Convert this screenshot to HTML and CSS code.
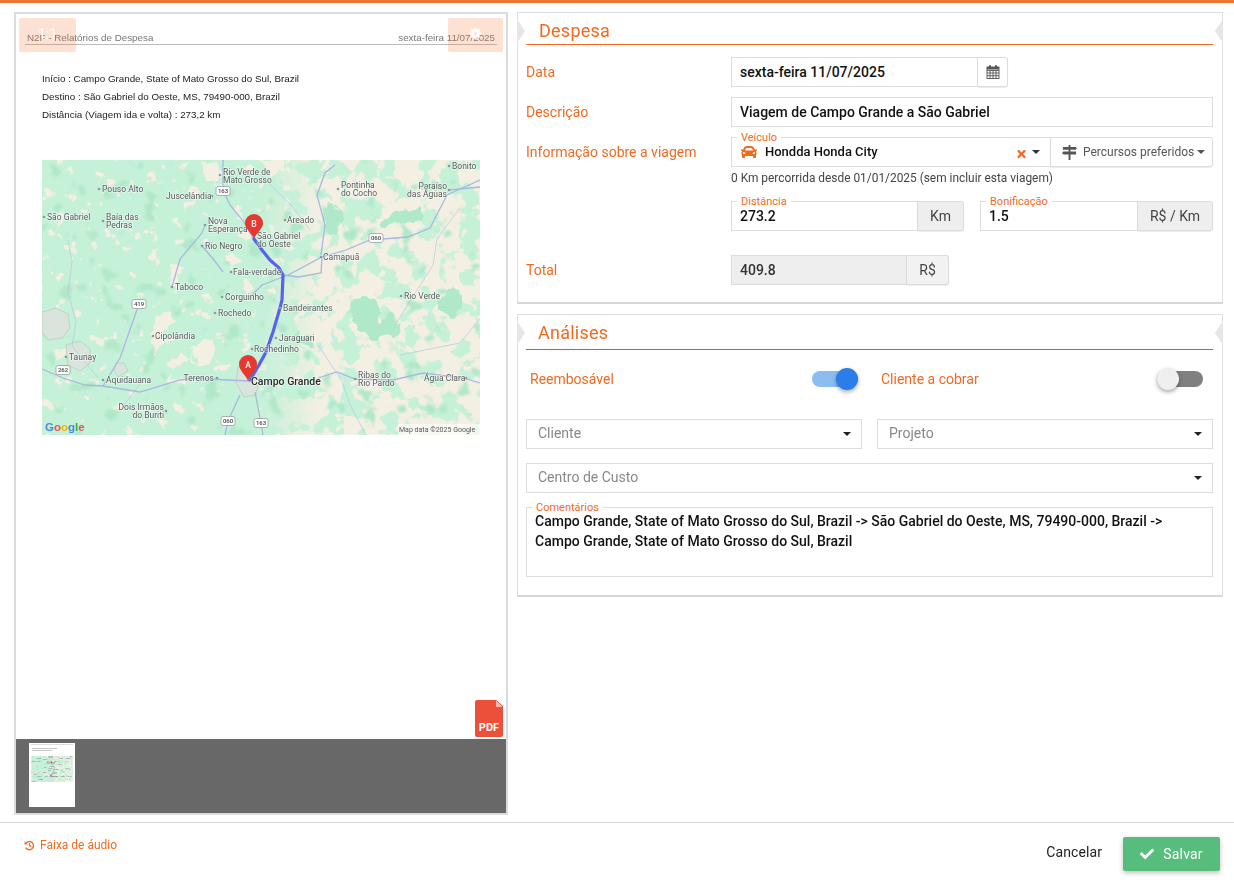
FILE: index.html
```html
<!DOCTYPE html>
<html lang="pt-BR">
<head>
<meta charset="utf-8">
<title>Despesa</title>
<link rel="stylesheet" href="styles.css">
</head>
<body>
<div class="app">
  <main class="main">
    <section class="viewer">
      <div class="page">
        <div class="doc-head"><span>N2F - Relatórios de Despesa</span><span>sexta-feira 11/07/2025</span></div>
        <div class="doc-lines">
          <p>Início : Campo Grande, State of Mato Grosso do Sul, Brazil</p>
          <p>Destino : São Gabriel do Oeste, MS, 79490-000, Brazil</p>
          <p>Distância (Viagem ida e volta) : 273,2 km</p>
        </div>
        <svg class="map" viewBox="42 160 438 275" width="438" height="275">
          <defs>
            <filter id="organic" x="0" y="0" width="1" height="1" color-interpolation-filters="sRGB">
              <feTurbulence type="fractalNoise" baseFrequency=".07" numOctaves="3" seed="4" result="n"/>
              <feDisplacementMap in="SourceGraphic" in2="n" scale="16" xChannelSelector="R" yChannelSelector="G"/>
              <feGaussianBlur stdDeviation=".7"/>
            </filter>
            <filter id="noise-sparse" x="0" y="0" width="1" height="1" color-interpolation-filters="sRGB">
              <feTurbulence type="fractalNoise" baseFrequency=".075" numOctaves="3" seed="11"/>
              <feColorMatrix values="0 0 0 0 .957  0 0 0 0 .937  0 0 0 0 .89  14 0 0 0 -9.100"/>
              <feGaussianBlur stdDeviation=".7"/>
            </filter>
            <filter id="noise-dense" x="0" y="0" width="1" height="1" color-interpolation-filters="sRGB">
              <feTurbulence type="fractalNoise" baseFrequency=".05" numOctaves="3" seed="23"/>
              <feColorMatrix values="0 0 0 0 .957  0 0 0 0 .937  0 0 0 0 .89  14 0 0 0 -6"/>
              <feGaussianBlur stdDeviation=".7"/>
            </filter>
            <filter id="noise-green" x="0" y="0" width="1" height="1" color-interpolation-filters="sRGB">
              <feTurbulence type="fractalNoise" baseFrequency=".05" numOctaves="3" seed="37"/>
              <feColorMatrix values="0 0 0 0 .69  0 0 0 0 .91  0 0 0 0 .79  14 0 0 0 -9.200"/>
              <feGaussianBlur stdDeviation=".8"/>
            </filter>
            <linearGradient id="east-fade" x1="0" x2="1" y1="0" y2="0">
              <stop offset=".5" stop-color="#000"/>
              <stop offset=".64" stop-color="#fff"/>
            </linearGradient>
            <mask id="east-mask" maskUnits="userSpaceOnUse" x="42" y="160" width="438" height="275">
              <rect x="42" y="160" width="438" height="275" fill="url(#east-fade)"/>
            </mask>
          </defs>
          <g id="map-art">
            <rect x="42" y="160" width="438" height="275" fill="#c5f1d9"/>
            <rect class="m-noise" x="42" y="160" width="438" height="275" filter="url(#noise-sparse)"/>
            <g mask="url(#east-mask)"><rect class="m-noise" x="42" y="160" width="438" height="275" filter="url(#noise-dense)"/></g>
            <rect class="m-noise" x="42" y="160" width="438" height="275" filter="url(#noise-green)"/>
            <g filter="url(#organic)">
              <path class="m-cream" d="M204 165l12-4 8 10-8 14-10-6zM262 160l20 0 4 10-16 6zM232 212l12 2 0 8-10-2zM224 253l8 2 2 12-8-2zM172 262l8 8-2 18-8-4zM150 330l8-12 12-6 6 10-12 10 2 14-10 10-4-16zM196 345l14-6 6 8-6 14-14 6zM168 365l14-14 6 8-14 10z"/>
              <path class="m-green" d="M330 200l14 10-4 26-14-2-4-16zM378 222l30-14 14 2-4 10-34 8zM350 300l16-6 10 8 2 18 14-4 10 10-8 10-20 4-16-12-4-16zM440 298l12-10 8 6 2 16-12 8-8-8zM296 330l16 8 2 10-14-4z"/>
            </g>
            <g class="map-soft">
              <path class="m-grey" d="M42 312l14-4 12 6 2 14-8 10-14 2-6-8zM66 345l14-4 10 8 0 14-10 8-12-6zM116 363l8 0 4 8-10 6-4-6zM238 367l16 0 6 10-4 18-12 2-8-14z"/>
              <g class="m-road">
                <path d="M223 160l0 30 7 15 14 17 10 18"/>
                <path d="M283 275l16 2 22-4 1-16 24-7 24-10 38-3 22-9 17-33 33-15"/>
                <path d="M449 190l31-3"/>
                <path d="M42 369l21 9 22 7 18 1 37 6 40-12 16-2 31 2 23 1"/>
                <path d="M318 378l19-6 18 7 38 1 30-7 40 5 17 5"/>
                <path d="M240 395l-12 26-3 14M255 392l6 31 2 12"/>
                <path d="M139 304l-19 54-17 28M172 287l8-28 22-26 3-8M202 246l12 14 9 12"/>
                <path d="M320 258l-32 17-26 10-10 10M335 165l-10 8-8 22 8 30-4 30"/>
              </g>
              <g class="m-river">
                <path d="M68 240l4 22-4 30 8 30-4 24 26 32M262 176l30 30 18 24M318 345l24 36 8 24 16 30M395 325l38-60 4-26 22-30M120 410l20-26M400 355l60-12 20-24"/>
              </g>
            </g>
            <path class="m-route" d="M254 239l8 11 8 10 9 8 4 7-1 25-2 8-7 24-7 20-7 13-9 15"/>
            <g class="map-labels">
              <g class="dots">
                <circle cx="220" cy="175" r="1.3"/><circle cx="99" cy="189" r="1.3"/><circle cx="212" cy="196" r="1.3"/><circle cx="44" cy="217" r="1.3"/><circle cx="103" cy="221" r="1.3"/><circle cx="205" cy="225" r="1.3"/><circle cx="202" cy="246" r="1.3"/><circle cx="231" cy="272" r="1.3"/><circle cx="172" cy="287" r="1.3"/><circle cx="222" cy="297" r="1.3"/><circle cx="285" cy="220" r="1.3"/><circle cx="338" cy="189" r="1.3"/><circle cx="321" cy="257" r="1.3"/><circle cx="449" cy="190" r="1.3"/><circle cx="449" cy="166" r="1.3"/><circle cx="401" cy="296" r="1.3"/><circle cx="215" cy="313" r="1.3"/><circle cx="153" cy="336" r="1.3"/><circle cx="66" cy="357" r="1.3"/><circle cx="103" cy="380" r="1.3"/><circle cx="217" cy="378" r="1.3"/><circle cx="166" cy="411" r="1.3"/><circle cx="280" cy="308" r="1.3"/><circle cx="276" cy="338" r="1.3"/><circle cx="252" cy="349" r="1.3"/><circle cx="355" cy="379" r="1.3"/><circle cx="466" cy="378" r="1.3"/>
              </g>
              <text x="223" y="175">Rio Verde de</text><text x="223" y="183">Mato Grosso</text>
              <text x="102" y="192">Pouso Alto</text><text x="166" y="199">Juscelândia</text>
              <text x="47" y="220">São Gabriel</text><text x="106" y="220">Baía das</text><text x="106" y="228">Pedras</text>
              <text x="208" y="224">Nova</text><text x="208" y="232">Esperança</text><text x="205" y="249">Rio Negro</text>
              <text x="233" y="275">Fala-verdade</text><text x="175" y="290">Taboco</text><text x="225" y="300">Corguinho</text>
              <text x="257" y="239">São Gabriel</text><text x="257" y="247">do Oeste</text><text x="287" y="223">Areado</text>
              <text x="341" y="188">Pontinha</text><text x="341" y="196">do Cocho</text><text x="323" y="260">Camapuã</text>
              <text x="447" y="189" text-anchor="end">Paraíso</text><text x="447" y="197" text-anchor="end">das Águas</text>
              <text x="452" y="169">Bonito</text><text x="404" y="299">Rio Verde</text><text x="218" y="316">Rochedo</text>
              <text x="155" y="339">Cipolândia</text><text x="69" y="360">Taunay</text><text x="106" y="383">Aquidauana</text>
              <text x="214" y="381" text-anchor="end">Terenos</text><text x="164" y="410" text-anchor="end">Dois Irmãos</text><text x="164" y="418" text-anchor="end">do Buriti</text>
              <text x="283" y="311">Bandeirantes</text><text x="279" y="341">Jaraguari</text><text x="254" y="352">Rochedinho</text>
              <text x="358" y="378">Ribas do</text><text x="358" y="386">Rio Pardo</text><text x="424" y="381">Água Clara</text>
              <text class="city" x="251" y="385">Campo Grande</text>
            </g>
            <g class="shields">
              <g transform="translate(223 191)"><rect x="-7" y="-4.5" width="14" height="9" rx="2"/><text y="2.2">163</text></g>
              <g transform="translate(376 238)"><rect x="-7" y="-4.5" width="14" height="9" rx="2"/><text y="2.2">060</text></g>
              <g transform="translate(139 304)"><rect x="-7" y="-4.5" width="14" height="9" rx="2"/><text y="2.2">419</text></g>
              <g transform="translate(63 370)"><rect x="-7" y="-4.5" width="14" height="9" rx="2"/><text y="2.2">262</text></g>
              <g transform="translate(228 421)"><rect x="-7" y="-4.5" width="14" height="9" rx="2"/><text y="2.2">060</text></g>
              <g transform="translate(261 423)"><rect x="-7" y="-4.5" width="14" height="9" rx="2"/><text y="2.2">163</text></g>
            </g>
            <g class="m-pin">
              <path d="M254 239c-2-6-9-10-9-16a9 9 0 0 1 18 0c0 6-7 10-9 16z"/>
              <text x="254" y="227">B</text>
              <path d="M248 381c-2-6-9-10-9-17a9 9 0 0 1 18 0c0 7-7 11-9 17z"/>
              <text x="248" y="368">A</text>
            </g>
            <rect x="398" y="424" width="82" height="11" fill="#fff" opacity=".6"/>
            <text class="m-credit" x="399" y="432">Map data ©2025 Google</text>
            <text class="m-google" x="45" y="431"><tspan fill="#4a86e8">G</tspan><tspan fill="#e2574c">o</tspan><tspan fill="#f4b400">o</tspan><tspan fill="#4a86e8">g</tspan><tspan fill="#34a853">l</tspan><tspan fill="#e2574c">e</tspan></text>
          </g>
        </svg>
        <div class="zoom-btn zoom-left">1:1</div>
        <div class="zoom-btn zoom-right">
          <svg viewBox="0 0 16 16" width="13" height="13"><path fill="#fff" d="M7 1h2l.3 2 1.3.5L12.300 2.300l1.400 1.400-1.200 1.700.5 1.300 2 .3v2l-2 .3-.5 1.300 1.200 1.700-1.400 1.400-1.700-1.200-1.300.5-.3 2H7l-.3-2-1.300-.5-1.700 1.200-1.400-1.400 1.200-1.700-.5-1.300-2-.3V7l2-.3.500-1.300-1.200-1.700 1.400-1.400 1.700 1.200 1.300-.5zM8 6a2 2 0 1 0 0 4 2 2 0 0 0 0-4z"/></svg>
        </div>
        <div class="pdf-icon">
          <span class="pdf-text">PDF</span>
        </div>
      </div>
      <div class="thumbs">
        <div class="thumb">
          <div class="thumb-head"></div>
          <div class="thumb-line"></div>
          <div class="thumb-line short"></div>
          <svg class="thumb-map" viewBox="42 160 438 275" width="42" height="26"><use href="#map-art"/></svg>
        </div>
      </div>
    </section>

    <div class="forms">
      <section class="panel panel-expense">
        <h2 class="panel-title">Despesa</h2>
        <div class="form-row">
          <label class="row-label">Data</label>
          <div class="field-group date-group">
            <div class="field grow">sexta-feira 11/07/2025</div>
            <div class="addon addon-white">
              <svg viewBox="0 0 14 16" width="14" height="16"><g fill="none" stroke="#555" stroke-width=".9"><rect x="1" y="3" width="12" height="11.500" fill="#fff"/><path d="M1 6.500h12M1 9h12M1 11.700h12M4 6.500v8M7 6.500v8M10 6.500v8"/></g><path fill="#555" d="M3 1.200h2v3.600H3zM9 1.200h2v3.600H9zM1 3h12v2.500H1z"/></svg>
            </div>
          </div>
        </div>
        <div class="form-row">
          <label class="row-label">Descrição</label>
          <div class="field grow">Viagem de Campo Grande a São Gabriel</div>
        </div>
        <div class="form-row">
          <label class="row-label">Informação sobre a viagem</label>
          <div class="field-group grow labelled">
            <span class="float-label">Veículo</span>
            <div class="field grow vehicle">
              <svg class="car" viewBox="0 0 512 512" width="16" height="16"><path fill="#f26a21" d="M499.990 176h-59.870l-16.640-41.600C406.380 91.630 365.570 64 319.500 64h-127c-46.060 0-86.880 27.630-103.990 70.400L71.870 176H12.010C4.200 176-1.530 183.340.370 190.910l6 24C7.700 220.250 12.500 224 18.010 224h20.070C24.650 235.730 16 252.780 16 272v48c0 16.120 6.160 30.670 16 41.930V416c0 17.670 14.330 32 32 32h32c17.670 0 32-14.330 32-32v-32h256v32c0 17.670 14.330 32 32 32h32c17.670 0 32-14.330 32-32v-54.070c9.840-11.250 16-25.800 16-41.930v-48c0-19.220-8.650-36.270-22.070-48H494c5.510 0 10.310-3.750 11.640-9.090l6-24c1.890-7.570-3.840-14.910-11.650-14.910zm-352.060-17.830c7.290-18.220 24.940-30.170 44.570-30.170h127c19.630 0 37.280 11.950 44.570 30.170L384 208H128l19.930-49.830zM96 319.800c-19.200 0-32-12.760-32-31.900S76.800 256 96 256s48 28.710 48 47.850-28.800 15.950-48 15.950zm320 0c-19.200 0-48 3.190-48-15.950S396.800 256 416 256s32 12.760 32 31.900-12.800 31.900-32 31.900z"/></svg>
              <span class="vehicle-name">Hondda Honda City</span>
              <svg class="clear" viewBox="0 0 352 512" width="9" height="12"><path fill="#f26a21" d="M242.720 256l100.070-100.070c12.280-12.280 12.280-32.190 0-44.480l-22.240-22.240c-12.280-12.280-32.190-12.280-44.480 0L176 189.280 75.930 89.210c-12.280-12.280-32.190-12.280-44.480 0L9.210 111.450c-12.280 12.280-12.280 32.190 0 44.480L109.280 256 9.210 356.070c-12.280 12.280-12.280 32.190 0 44.480l22.240 22.240c12.280 12.280 32.200 12.280 44.480 0L176 322.720l100.070 100.070c12.280 12.280 32.200 12.280 44.480 0l22.240-22.240c12.280-12.280 12.280-32.190 0-44.480L242.720 256z"/></svg>
              <span class="caret"></span>
            </div>
            <div class="route-btn">
              <svg viewBox="0 0 16 16" width="15" height="15"><path fill="#555" d="M7 0h2v2h5.500L16 3.500 14.500 5H1V2h6zM1.500 7h13.500v3.200H1.500L0 8.600zM7 10.200h2V16H7zM7 5h2v2H7z"/></svg>
              <span>Percursos preferidos</span>
              <span class="caret caret-grey"></span>
            </div>
          </div>
        </div>
        <p class="help">0 Km percorrida desde 01/01/2025 (sem incluir esta viagem)</p>
        <div class="pair">
          <div class="field-group labelled">
            <span class="float-label">Distância</span>
            <div class="field grow">273.2</div>
            <div class="addon addon-km">Km</div>
          </div>
          <div class="field-group labelled">
            <span class="float-label">Bonificação</span>
            <div class="field grow">1.5</div>
            <div class="addon addon-rate">R$ / Km</div>
          </div>
        </div>
        <div class="form-row total-row">
          <label class="row-label">Total</label>
          <div class="field-group total-group">
            <div class="field grow field-disabled">409.8</div>
            <div class="addon">R$</div>
          </div>
        </div>
      </section>

      <section class="panel panel-analysis">
        <h2 class="panel-title title-dark">Análises</h2>
        <div class="toggles">
          <div class="toggle-item">
            <span class="toggle-label">Reembosável</span>
            <span class="toggle on"><span class="knob"></span></span>
          </div>
          <div class="toggle-item inset">
            <span class="toggle-label">Cliente a cobrar</span>
            <span class="toggle off"><span class="knob"></span></span>
          </div>
        </div>
        <div class="select-pair">
          <div class="select"><span>Cliente</span><span class="caret caret-dark"></span></div>
          <div class="select"><span>Projeto</span><span class="caret caret-dark"></span></div>
        </div>
        <div class="select select-wide"><span>Centro de Custo</span><span class="caret caret-dark"></span></div>
        <div class="comments labelled">
          <span class="float-label comment-label">Comentários</span>
          Campo Grande, State of Mato Grosso do Sul, Brazil -&gt; São Gabriel do Oeste, MS, 79490-000, Brazil -&gt; Campo Grande, State of Mato Grosso do Sul, Brazil
        </div>
      </section>
    </div>
  </main>

  <footer class="footer">
    <a class="audio">
      <svg viewBox="0 0 16 16" width="11" height="11"><path fill="none" stroke="#f26a21" stroke-width="2" d="M3.400 4A6 6 0 1 1 2.500 11"/><path fill="#f26a21" d="M.8 1.800L6 6.500H.8zM7.300 4.500h1.700v3.300l2.300 1.500-.9 1.300-3.100-2z"/></svg>
      <span>Faixa de áudio</span>
    </a>
    <div class="actions">
      <span class="cancel">Cancelar</span>
      <button class="save" type="button">
        <svg viewBox="0 0 512 512" width="14" height="14"><path fill="#fff" d="M173.898 439.404l-166.400-166.400c-9.997-9.997-9.997-26.206 0-36.204l36.203-36.204c9.997-9.998 26.207-9.998 36.204 0L192 312.690 432.095 72.596c9.997-9.997 26.207-9.997 36.204 0l36.203 36.204c9.997 9.997 9.997 26.206 0 36.204l-294.400 294.401c-9.998 9.997-26.207 9.997-36.204-.001z"/></svg>
        <span>Salvar</span>
      </button>
    </div>
  </footer>
</div>
</body>
</html>
```
FILE: styles.css
```css
* { box-sizing: border-box; }
html, body { margin: 0; height: 100%; }
body { font-family: Roboto, "Liberation Sans", sans-serif; font-size: 14px; color: #111; background: #fff; overflow: hidden; }
p { margin: 0; }
.app { height: 883px; display: flex; flex-direction: column; border-top: 3px solid #ee7530; }
.main { flex: 1; min-height: 0; display: flex; gap: 9px; padding: 9px 11px 7px 14px; }

/* Viewer */
.viewer { width: 494px; display: flex; flex-direction: column; border: 2px solid #dcdcdc; }
.page { flex: 1; position: relative; min-height: 0; }
.doc-head { margin: 18px 9px 0; padding: 0 2px; height: 13px; display: flex; justify-content: space-between; align-items: center; border-bottom: 1px solid #bbb; font: 9.8px/12px "Liberation Sans", sans-serif; color: #777; filter: blur(.3px); }
.doc-lines { margin: 25px 0 0 26px; font: 9.8px/18px "Liberation Sans", sans-serif; color: #222; filter: blur(.3px); }
.map { display: block; margin: 36px 0 0 26px; }
.m-noise { fill: #fff; }
.map-soft { filter: blur(.6px); }
.m-cream { fill: #f4efe3; }
.m-green { fill: #b0e8ca; }
.m-grey { fill: #d9e4dc; stroke: #c3d0c6; stroke-width: 1; }
.m-road path { fill: none; stroke: #a9b8de; stroke-width: 1.300; }
.m-river path { fill: none; stroke: #b5c8e0; stroke-width: .7; }
.m-route { fill: none; stroke: #5664ec; stroke-width: 3.200; stroke-linejoin: round; stroke-linecap: round; filter: blur(.3px); }
.map-labels { filter: blur(.35px); }
.map-labels text { font: 8.500px Roboto, sans-serif; fill: #555a5a; paint-order: stroke; stroke: rgba(255,255,255,.55); stroke-width: 1.500; }
.map-labels .city { font-size: 10.500px; font-weight: 500; fill: #2a2a2a; }
.dots circle { fill: #8e9a98; }
.shields { filter: blur(.3px); }
.shields rect { fill: #fff; stroke: #98a0a0; stroke-width: .8; }
.shields text { font: 500 6px Roboto, sans-serif; fill: #444; text-anchor: middle; }
.m-pin path { fill: #e5392f; }
.m-pin text { font: 700 8.500px Roboto, sans-serif; fill: #fff; text-anchor: middle; opacity: .85; }
.m-credit { font: 7px Roboto, sans-serif; fill: #555; }
.m-google { font: 700 11.500px "Liberation Sans", sans-serif; }
.zoom-btn { position: absolute; top: 4px; height: 34px; display: flex; align-items: center; justify-content: center; background: rgba(246,120,50,.22); border-radius: 2px; color: #fff; font-size: 14px; padding-bottom: 3px; }
.zoom-left { left: 3px; width: 57px; }
.zoom-right { right: 3px; width: 55px; }
.pdf-icon { position: absolute; right: 3px; bottom: 2px; width: 28px; height: 37px; background: #ec4f3a; border-radius: 2px; clip-path: polygon(0 0, 76% 0, 100% 17%, 100% 100%, 0 100%); display: flex; align-items: flex-end; justify-content: center; padding-bottom: 3px; }
.pdf-icon::after { content: ""; position: absolute; top: 0; right: 0; width: 7px; height: 7px; background: linear-gradient(45deg, #f7b9ae 50%, transparent 50%); }
.pdf-text { font: 700 11px/12px Roboto, sans-serif; color: #fff; }
.thumbs { height: 74px; background: #686868; padding: 4px 0 0 13px; flex: none; }
.thumb { width: 46px; height: 64px; background: #fff; padding: 1px 2px; overflow: hidden; }
.thumb-head { height: 1px; background: #ddd; margin-bottom: 3px; }
.thumb-line { height: 1px; width: 25px; background: #c4c4c4; margin: 0 0 1px 1px; }
.thumb-line.short { width: 20px; }
.thumb-map { display: block; margin-top: 5px; }

/* Panels */
.forms { width: 706px; display: flex; flex-direction: column; gap: 10px; }
.panel { position: relative; border: 1px solid #dedede; border-bottom: 2px solid #d6d6d6; padding: 0 9px 0 8px; }
.panel::before, .panel::after { content: ""; position: absolute; top: 6px; border-style: solid; border-width: 12px 0; border-color: transparent; }
.panel::before { left: -1px; border-left: 8px solid #e6e6e6; }
.panel::after { right: -1px; border-right: 8px solid #e6e6e6; }
.panel-expense { height: 292px; }
.panel-analysis { height: 283px; }
.panel-title { margin: 0; height: 32px; padding: 7px 0 0 13px; font: 400 18px/22px Roboto, sans-serif; letter-spacing: .25px; color: #f26a21; border-bottom: 1px solid #f26a21; }
.title-dark { height: 35px; padding: 7px 0 0 12px; border-bottom-color: #777; }
.form-row { display: flex; align-items: center; margin-top: 10px; height: 30px; }
.panel-title + .form-row { margin-top: 12px; }
.row-label { width: 205px; flex: none; color: #f26a21; }
.field-group { display: flex; position: relative; }
.grow { flex: 1; min-width: 0; }
.field { height: 30px; border: 1px solid #dcdcdc; padding: 0 8px; line-height: 28px; font-weight: 500; color: #111; background: #fff; }
.date-group { width: 277px; }
.addon { flex: none; display: flex; align-items: center; justify-content: center; height: 30px; padding: 0 12px; background: #eee; border: 1px solid #dcdcdc; border-left: 0; border-radius: 0 3px 3px 0; box-shadow: 0 1px 1px rgba(0,0,0,.08); color: #444; }
.addon-white { width: 30px; padding: 0; background: #fff; }
.addon-km { width: 46px; padding: 0; }
.addon-rate { width: 75px; padding: 0; }
.labelled { position: relative; }
.float-label { position: absolute; left: 6px; top: -6px; background: #fff; padding: 0 4px; font: 400 11px/13px Roboto, sans-serif; color: #f26a21; z-index: 1; }
.comment-label { left: 5px; top: -7px; }
.vehicle { display: flex; align-items: center; border-right: 0; padding: 0 10px 0 9px; }
.car { margin-right: 8px; flex: none; }
.vehicle-name { flex: 1; font-size: 13px; }
.clear { margin: 3px 6px 0 0; }
.caret { display: inline-block; width: 0; height: 0; border-style: solid; border-width: 4px 4px 0; border-color: #333 transparent transparent; }
.caret-grey { border-color: #555 transparent transparent; }
.caret-dark { border-color: #222 transparent transparent; }
.route-btn { width: 163px; flex: none; display: flex; align-items: center; gap: 3px; height: 30px; padding: 0 0 0 11px; border: 1px solid #dcdcdc; border-radius: 0 3px 3px 0; box-shadow: 0 1px 1px rgba(0,0,0,.08); font-size: 12px; color: #555; white-space: nowrap; }
.route-btn svg { flex: none; margin-right: 3px; }
.help { margin: 3px 0 0 205px; font-size: 11.9px; line-height: 16px; color: #444; }
.pair { margin: 15px 0 0 205px; display: grid; grid-template-columns: 233px 233px; gap: 16px; }
.total-row { margin-top: 24px; }
.total-group { width: 218px; }
.field-disabled { background: #eee; color: #333; }
.total-group .addon { width: 42px; padding: 0; background: #f2f2f2; }

.toggles { display: grid; grid-template-columns: 336px 336px; gap: 15px; height: 30px; margin-top: 14px; }
.toggle-item { display: flex; align-items: center; justify-content: space-between; padding: 0 4px; }
.toggle-item.inset { padding-right: 10px; }
.toggle-label { color: #f26a21; }
.toggle { position: relative; display: block; width: 46px; height: 16px; border-radius: 8px; }
.toggle.on { background: #8bbdf3; }
.toggle.off { background: #808080; }
.knob { position: absolute; top: -3px; width: 22px; height: 22px; border-radius: 50%; box-shadow: 0 2px 4px rgba(0,0,0,.35); }
.on .knob { right: 0; background: #2b7de9; }
.off .knob { left: 0; background: #efefef; }
.select-pair { display: grid; grid-template-columns: 336px 336px; gap: 15px; margin-top: 25px; }
.select { height: 30px; display: flex; align-items: center; justify-content: space-between; border: 1px solid #dcdcdc; padding: 0 10px 2px 11px; color: #888; }
.select .caret { margin-top: 2px; }
.select-wide { margin-top: 14px; }
.comments { height: 70px; margin-top: 14px; border: 1px solid #dcdcdc; padding: 3px 8px; font-weight: 500; line-height: 20px; color: #111; }

/* Footer */
.footer { flex: none; height: 61px; border-top: 1px solid #d8d8d8; display: flex; justify-content: space-between; align-items: flex-start; padding: 14px 14px 0 24px; }
.audio { display: flex; align-items: center; gap: 5px; font-size: 12px; line-height: 16px; color: #f26a21; }
.actions { display: flex; align-items: center; gap: 21px; }
.cancel { color: #222; letter-spacing: .1px; padding-bottom: 4px; }
.save { width: 97px; height: 34px; display: flex; align-items: center; justify-content: center; gap: 9px; border: 0; border-radius: 2px; background: #57bd7c; box-shadow: 0 2px 5px rgba(0,0,0,.25); color: #fff; font: 400 14px Roboto, sans-serif; letter-spacing: .2px; padding: 0; }
```
